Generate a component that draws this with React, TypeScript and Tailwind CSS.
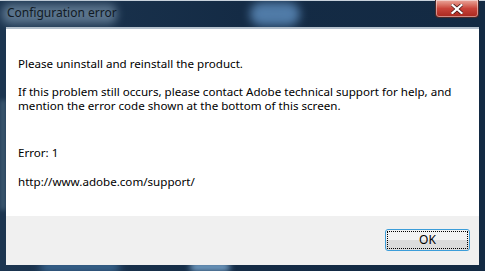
import React from "react";

const FONT = { fontFamily: '"Noto Sans", "Open Sans", sans-serif' };

function CloseButton() {
  return (
    <button className="absolute top-0 right-[6px] w-[44px] h-[18px] rounded-b-[4px] border border-t-0 border-[#4a2a2a] bg-gradient-to-b from-[#e9a79c] via-[#c9443a] to-[#a8271e] shadow-[inset_0_0_0_1px_rgba(255,255,255,0.45)] flex items-center justify-center">
      <svg width="12" height="10" viewBox="0 0 12 10">
        <path d="M1.5 1 L10.5 9 M10.5 1 L1.5 9" stroke="#3a1010" strokeWidth="3.6" strokeLinecap="square" />
        <path d="M1.5 1 L10.5 9 M10.5 1 L1.5 9" stroke="#ffffff" strokeWidth="2.2" strokeLinecap="square" />
      </svg>
    </button>
  );
}

export default function App() {
  return (
    <div
      className="relative w-[485px] h-[271px] overflow-hidden flex flex-col bg-gradient-to-r from-[#1c3550] via-[#142b45] to-[#132a43] text-[11.6px]"
      style={FONT}
    >
      {/* aero glass highlights */}
      <div className="absolute left-[250px] top-[2px] w-[50px] h-[24px] rounded-full bg-[#5f8fc0] blur-[5px] opacity-80" />
      <div className="absolute left-[40px] top-[262px] w-[80px] h-[10px] rounded-full bg-[#3c6a95] blur-[4px]" />
      <div className="absolute left-[190px] top-[263px] w-[40px] h-[8px] rounded-full bg-[#7aa7cf] blur-[3px]" />
      <div className="absolute left-0 top-[100px] w-[6px] h-[110px] bg-[#3b5870] blur-[2px]" />
      <div className="absolute left-0 top-0 w-full h-px bg-[#c8d2dc]" />

      {/* title bar */}
      <div className="relative h-[27px] shrink-0 flex items-center pl-[7px]">
        <div className="absolute left-[2px] top-[4px] w-[115px] h-[20px] rounded-[8px] bg-[#7690a8] blur-[4px] opacity-70" />
        <span className="relative text-[12px] text-[#111a24] leading-none pb-[1px]">Configuration error</span>
        <CloseButton />
      </div>

      {/* client area */}
      <div className="relative flex-1 mx-[6px] mb-[6px] border-t-2 border-[#b4c0cc] bg-white flex flex-col text-black">
        <div className="flex-1 pl-[12px] pt-[27px] leading-[15px]">
          <p>Please uninstall and reinstall the product.</p>
          <div className="mt-[14px] flex flex-col leading-[14px]">
            <p>If this problem still occurs, please contact Adobe technical support for help, and</p>
            <p>mention the error code shown at the bottom of this screen.</p>
          </div>
          <p className="mt-[32px]">Error: 1</p>
          <p className="mt-[14px]">http://www.adobe.com/support/</p>
        </div>
        <div className="h-[49px] shrink-0 bg-[#f0f0f0] flex justify-end pt-[13px] pr-[9px]">
          <button className="w-[85px] h-[22px] rounded-[3px] border border-[#3c9dd9] bg-gradient-to-b from-[#f2f2f2] from-50% to-[#dcdcdc] to-50% p-[1px]">
            <span className="flex w-full h-full items-center justify-center border border-dotted border-black leading-none text-[12px]">
              OK
            </span>
          </button>
        </div>
      </div>
    </div>
  );
}
